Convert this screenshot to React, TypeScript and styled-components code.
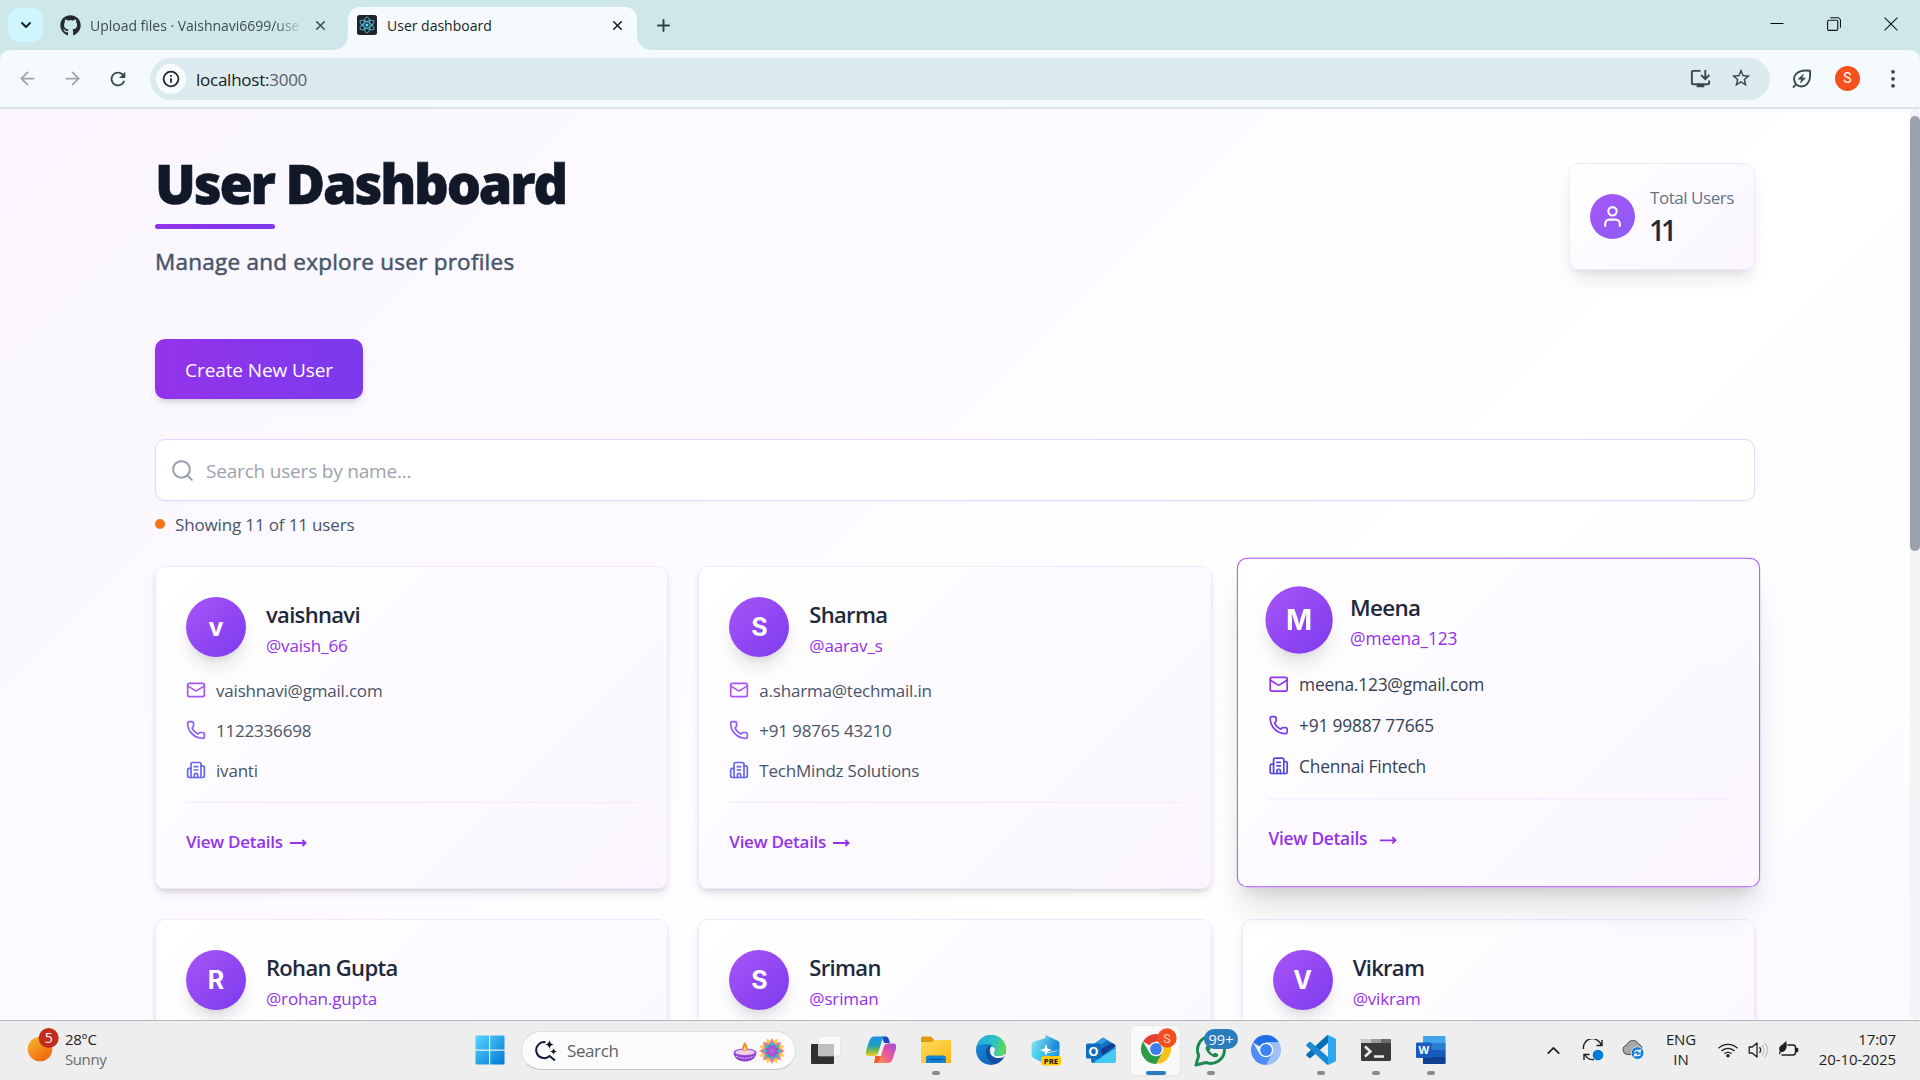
import React from "react";
import styled, { createGlobalStyle, css } from "styled-components";
import {
  ArrowLeft, ArrowRight, Building2, ChevronDown, ChevronUp, Mail, Phone, Plus, Search, User, X,
} from "lucide-react";
import { FaGithub } from "react-icons/fa";
import { MdOutlineInstallDesktop, MdOutlineRefresh, MdStarBorder } from "react-icons/md";

const GlobalStyle = createGlobalStyle`
  * { box-sizing: border-box; }
  body {
    margin: 0;
    overflow: hidden;
    font-family: "Open Sans", "Noto Sans", sans-serif;
  }
  svg { display: block; flex: none; }
`;

const Screen = styled.div`
  width: 1920px;
  height: 1080px;
  display: flex;
  flex-direction: column;
  overflow: hidden;
`;

/* ---------- browser frame ---------- */

const TabStrip = styled.div`
  height: 50px;
  flex: none;
  display: flex;
  background: #cee7eb;
  padding-left: 8px;
`;

const TabMenu = styled.div`
  width: 35px;
  height: 34px;
  margin-top: 8px;
  border-radius: 11px;
  background: #cff6fe;
  display: flex;
  align-items: center;
  justify-content: center;
`;

const Tab = styled.div<{ $active?: boolean }>`
  height: 50px;
  display: flex;
  align-items: center;
  font-size: 14px;
  color: #3c4d51;
  white-space: nowrap;
  width: 305px;
  padding: 0 20px 0 17px;
  ${(p) =>
    p.$active &&
    css`
      position: relative;
      width: 289px;
      height: 43px;
      margin-top: 7px;
      padding: 0 12px 7px 9px;
      background: #f5fafd;
      border-radius: 12px 12px 0 0;
      color: #1b2326;
      &::before,
      &::after {
        content: "";
        position: absolute;
        bottom: 0;
        width: 14px;
        height: 14px;
      }
      &::before {
        left: -14px;
        background: radial-gradient(circle at 0 0, transparent 13.5px, #f5fafd 14px);
      }
      &::after {
        right: -14px;
        background: radial-gradient(circle at 100% 0, transparent 13.5px, #f5fafd 14px);
      }
    `}
`;

const TabTitle = styled.span<{ $fade?: boolean }>`
  flex: 1;
  overflow: hidden;
  margin: 0 14px 0 10px;
  ${(p) =>
    p.$fade &&
    css`
      margin: 0 10px 0 9px;
      letter-spacing: -0.02px;
      mask-image: linear-gradient(90deg, #000 185px, transparent 213px);
    `}
`;

const NewTab = styled.div`
  display: flex;
  align-items: center;
  padding-left: 17px;
`;

const WindowButtons = styled.div`
  margin-left: auto;
  display: flex;
  align-items: center;
  height: 48px;
`;

const WindowButton = styled.div`
  width: 57px;
  display: flex;
  justify-content: center;
  &:last-child { width: 58px; }
`;

const ToolbarBack = styled.div`
  flex: none;
  background: #cee7eb;
`;

const Toolbar = styled.div`
  height: 59px;
  display: flex;
  align-items: center;
  background: #f5fafd;
  border-bottom: 2px solid #d9e4e9;
  border-radius: 10px 10px 0 0;
  padding: 0 24px 0 17px;
`;

const NavButton = styled.div<{ $muted?: boolean }>`
  width: 45px;
  display: flex;
  color: ${(p) => (p.$muted ? "#9aa5a9" : "#36484d")};
`;

const Omnibox = styled.div`
  flex: 1;
  height: 42px;
  border-radius: 21px;
  background: #dcebef;
  display: flex;
  align-items: center;
  padding: 0 18px 0 6px;
  margin: 0 21px 0 -2px;
  color: #3c4649;
`;

const SiteInfo = styled.div`
  width: 30px;
  height: 30px;
  border-radius: 50%;
  background: #f8fcfe;
  display: flex;
  align-items: center;
  justify-content: center;
`;

const Url = styled.span`
  flex: 1;
  margin-left: 10px;
  padding-top: 1px;
  font-size: 17px;
  letter-spacing: -0.25px;
  color: #1a2124;
  span { color: #566367; }
`;

const OmniIcons = styled.div`
  display: flex;
  gap: 18px;
`;

const Profile = styled.div`
  width: 25px;
  height: 25px;
  margin: 0 30px 0 22px;
  border-radius: 50%;
  background: #f6511d;
  color: #fff;
  font: 14px/25px Roboto, sans-serif;
  text-align: center;
`;

/* ---------- page ---------- */

const Viewport = styled.div`
  height: 911px;
  flex: none;
  display: flex;
  overflow: hidden;
`;

const Page = styled.main`
  width: 1910px;
  height: 1885px;
  padding: 44px 155px 0;
  background: linear-gradient(135deg, #faf5ff 0%, #ffffff 50%, #faf5ff 100%);
`;

const ScrollTrack = styled.div`
  width: 10px;
  height: 911px;
  padding-top: 7px;
  border-radius: 5px;
  background: #f1f3f5;
`;

const ScrollThumb = styled.div`
  height: 435px;
  border-radius: 5px;
  background: #9ba0ad;
`;

const Header = styled.header`
  display: flex;
  justify-content: space-between;
  align-items: flex-start;
  height: 186px;
`;

const Title = styled.h1`
  margin: 0 0 11px;
  font-size: 54px;
  line-height: 61px;
  height: 60px;
  font-weight: 800;
  letter-spacing: -2.2px;
  color: #111827;
  -webkit-text-stroke: 0.6px #111827;
`;

const Underline = styled.div`
  width: 120px;
  height: 5px;
  border-radius: 3px;
  background: linear-gradient(90deg, #9333ea, #7c3aed);
`;

const Subtitle = styled.p`
  margin: 17px 0 0;
  font-size: 22.5px;
  line-height: 31px;
  letter-spacing: 0.24px;
  color: #475569;
  -webkit-text-stroke: 0.5px #475569;
`;

const StatCard = styled.div`
  display: flex;
  align-items: center;
  gap: 15px;
  width: 186px;
  height: 107px;
  margin-top: 10px;
  padding: 0 20px;
  border: 1px solid #f3e8ff;
  border-radius: 10px;
  background: linear-gradient(135deg, #ffffff, #faf5ff);
  box-shadow: 0 12px 19px -4px rgba(0, 0, 0, 0.1), 0 5px 8px -5px rgba(0, 0, 0, 0.1);
`;

const StatIcon = styled.div`
  width: 45px;
  height: 45px;
  flex: none;
  border-radius: 50%;
  background: linear-gradient(135deg, #a855f7, #8b5cf6);
  color: #fff;
  display: flex;
  align-items: center;
  justify-content: center;
`;

const StatLabel = styled.div`
  margin-top: 2px;
  font-size: 17px;
  line-height: 25px;
  letter-spacing: -0.45px;
  white-space: nowrap;
  color: #64748b;
`;

const StatValue = styled.div`
  font-size: 28px;
  line-height: 41px;
  font-weight: 650;
  letter-spacing: -4px;
  margin-left: -1px;
  color: #1e293b;
`;

const CreateButton = styled.button`
  display: block;
  width: 208px;
  height: 60px;
  padding: 2px 0 0;
  border: 0;
  border-radius: 10px;
  background: linear-gradient(90deg, #9333ea, #7c3aed);
  color: #fff;
  font: 19px/30px "Open Sans", sans-serif;
  letter-spacing: -0.1px;
  box-shadow: 0 5px 8px -1px rgba(0, 0, 0, 0.1), 0 3px 5px -2px rgba(0, 0, 0, 0.1);
`;

const SearchField = styled.div`
  display: flex;
  align-items: center;
  gap: 11px;
  height: 62px;
  margin-top: 40px;
  padding-left: 14px;
  border: 1px solid #e9d5ff;
  border-radius: 10px;
  background: #fff;
  box-shadow: 0 1px 3px rgba(0, 0, 0, 0.05);
  color: #9ca3af;
  font-size: 19px;
  letter-spacing: -0.19px;
  span { padding-top: 1px; }
`;

const ResultCount = styled.div`
  display: flex;
  align-items: center;
  gap: 10px;
  height: 27px;
  margin: 10px 0 28px;
  font-size: 17px;
  letter-spacing: -0.15px;
  color: #475569;
  &::before {
    content: "";
    width: 10px;
    height: 10px;
    border-radius: 50%;
    margin-bottom: 1px;
    background: #f97316;
  }
`;

const Grid = styled.section`
  display: grid;
  grid-template-columns: repeat(3, 1fr);
  gap: 30px;
`;

const Avatar = styled.div`
  width: 60px;
  height: 60px;
  flex: none;
  border-radius: 50%;
  background: linear-gradient(135deg, #a855f7, #7c3aed);
  box-shadow: 0 12px 19px -4px rgba(0, 0, 0, 0.13), 0 5px 8px -5px rgba(0, 0, 0, 0.1);
  color: #fff;
  font: 750 25px/61px Inter, "Liberation Sans", sans-serif;
  text-align: center;
`;

const CardHead = styled.div`
  display: flex;
  gap: 20px;
  height: 60px;
  margin-bottom: 18px;
`;

const Name = styled.div`
  font-size: 22px;
  line-height: 34px;
  font-weight: 600;
  letter-spacing: -0.68px;
  color: #1e293b;
`;

const Handle = styled.div`
  margin-top: 2px;
  font-size: 17px;
  line-height: 26px;
  letter-spacing: -0.15px;
  color: #9333ea;
`;

const Contact = styled.div<{ $tone: string }>`
  display: flex;
  align-items: center;
  gap: 10px;
  height: 30px;
  font-size: 17px;
  letter-spacing: -0.2px;
  color: #475569;
  svg { color: ${(p) => p.$tone}; margin-bottom: 1px; }
`;

const Divider = styled.div`
  height: 1px;
  margin: 17px 0 25px;
  background: #f3e8ff;
`;

const Details = styled.a`
  display: flex;
  align-items: center;
  gap: 7px;
  height: 27px;
  font-size: 17px;
  font-weight: 600;
  letter-spacing: -0.27px;
  color: #9333ea;
  svg { margin-top: 3px; }
`;

const Card = styled.article<{ $hovered?: boolean }>`
  height: 323px;
  padding: 30px;
  border: 1px solid #f3e8ff;
  border-radius: 10px;
  background: linear-gradient(135deg, #ffffff, #faf5ff);
  box-shadow: 0 5px 8px -1px rgba(0, 0, 0, 0.1), 0 3px 5px -2px rgba(0, 0, 0, 0.1);
  ${(p) =>
    p.$hovered &&
    css`
      border-color: #a855f7;
      transform: translateY(-5px) scale(1.02);
      box-shadow: 0 25px 31px -6px rgba(0, 0, 0, 0.12), 0 10px 13px -7px rgba(0, 0, 0, 0.1);
      ${Avatar} { transform: scale(1.1); }
      ${Contact} { color: #334155; }
      ${Details} { gap: 12px; }
    `}
`;

const ContactList = styled.div`
  display: flex;
  flex-direction: column;
  gap: 10px;
`;

/* ---------- taskbar ---------- */

const Taskbar = styled.footer`
  flex: 1;
  display: flex;
  background: #eeeeee;
  border-top: 1px solid #b9b5bd;
  color: #1f1f1f;
  font-size: 15px;
`;

const Weather = styled.div`
  width: 462px;
  display: flex;
  gap: 5px;
  padding: 7px 0 0 25px;
`;

const TwoLines = styled.div<{ $align?: string; $w?: number; $muted?: boolean }>`
  width: ${(p) => (p.$w ? `${p.$w}px` : "auto")};
  padding-top: ${(p) => (p.$muted ? 1 : 0)}px;
  text-align: ${(p) => p.$align ?? "left"};
  line-height: 20px;
  letter-spacing: ${(p) => (p.$muted ? -0.4 : -0.1)}px;
  div:last-child { color: ${(p) => (p.$muted ? "#6a6a6a" : "inherit")}; }
`;

const Slot = styled.div<{ $w?: number; $active?: boolean; $dot?: boolean }>`
  width: ${(p) => p.$w ?? 55}px;
  height: 58px;
  display: flex;
  align-items: center;
  justify-content: center;
  position: relative;
  ${(p) =>
    p.$active &&
    css`
      width: 49px;
      height: 49px;
      margin: 5px 3px 0;
      border-radius: 5px;
      background: #f9f9f9;
      box-shadow: 0 0 1px 1px #e4e4e4;
      padding-bottom: 3px;
    `}
  ${(p) =>
    (p.$dot || p.$active) &&
    css`
      &::after {
        content: "";
        position: absolute;
        bottom: ${p.$active ? 0 : 4}px;
        left: 50%;
        transform: translateX(-50%);
        width: ${p.$active ? 20 : 8}px;
        height: 4px;
        border-radius: 2px;
        background: ${p.$active ? "#2a7dbc" : "#8b8b8b"};
      }
    `}
`;

const TaskSearch = styled.div`
  width: 275px;
  height: 39px;
  margin: 10px 2px 0 4px;
  padding: 0 10px 0 13px;
  border: 1px solid #dedede;
  border-bottom-color: #c4c4c4;
  border-radius: 20px;
  background: #fbfbfb;
  display: flex;
  align-items: center;
  font-size: 17px;
  letter-spacing: -0.4px;
  color: #606060;
  span { flex: 1; margin-left: 9px; }
`;

const Tray = styled.div`
  margin-left: auto;
  display: flex;
  padding-right: 24px;
`;

const TrayText = styled.div<{ $shift?: number }>`
  padding: 8px ${(p) => p.$shift ?? 0}px 0 0;
`;

type Person = {
  name: string; handle: string; email?: string; phone?: string; company?: string; hovered?: boolean;
};

const people: Person[] = [
  { name: "vaishnavi", handle: "@vaish_66", email: "vaishnavi@gmail.com", phone: "1122336698", company: "ivanti" },
  { name: "Sharma", handle: "@aarav_s", email: "a.sharma@techmail.in", phone: "+91 98765 43210", company: "TechMindz Solutions" },
  { name: "Meena", handle: "@meena_123", email: "meena.123@gmail.com", phone: "+91 99887 77665", company: "Chennai Fintech", hovered: true },
  { name: "Rohan Gupta", handle: "@rohan.gupta" },
  { name: "Sriman", handle: "@sriman" },
  { name: "Vikram", handle: "@vikram" },
];

const LongArrow = () => (
  <svg width="17" height="10" viewBox="0 0 17 10" fill="none" stroke="currentColor" strokeWidth="1.8">
    <path d="M0 5h15.5M12.4 2 15.6 5l-3.200 3" />
  </svg>
);

function UserCard({ p }: { p: Person }) {
  const tones = p.hovered ? ["#9333ea", "#7c3aed", "#4f46e5"] : ["#a855f7", "#8b5cf6", "#6366f1"];
  return (
    <Card $hovered={p.hovered}>
      <CardHead>
        <Avatar>{p.name[0]}</Avatar>
        <div>
          <Name>{p.name}</Name>
          <Handle>{p.handle}</Handle>
        </div>
      </CardHead>
      {p.email && (
        <>
          <ContactList>
            <Contact $tone={tones[0]}><Mail size={20} />{p.email}</Contact>
            <Contact $tone={tones[1]}><Phone size={20} />{p.phone}</Contact>
            <Contact $tone={tones[2]}><Building2 size={20} />{p.company}</Contact>
          </ContactList>
          <Divider />
          <Details>View Details <LongArrow /></Details>
        </>
      )}
    </Card>
  );
}

/* ---------- drawn icons ---------- */

const ReactLogo = () => (
  <svg width="20" height="20" viewBox="0 0 20 20" fill="none" stroke="#53c1de" strokeWidth="0.9">
    <rect width="20" height="20" rx="2.5" fill="#20232a" stroke="none" />
    <circle cx="10" cy="10" r="1.5" fill="#61dafb" stroke="none" />
    {[30, 90, 150].map((a) => (
      <ellipse key={a} cx="10" cy="10" rx="8" ry="3.1" transform={`rotate(${a} 10 10)`} />
    ))}
  </svg>
);

const InfoIcon = () => (
  <svg width="18" height="18" viewBox="0 0 18 18" fill="none" stroke="#1f292c" strokeWidth="1.8">
    <circle cx="9" cy="9" r="7.4" />
    <path d="M9 8.2v4.6M9 5v1.8" />
  </svg>
);

const SaverIcon = () => (
  <svg width="22" height="22" viewBox="0 0 22 22" fill="none" stroke="#344b50" strokeWidth="1.9" strokeLinejoin="round">
    <path d="M19 2.800c-6-.9-11 .2-13.800 3C2.400 8.600 2.400 13 5 16.200c3 3 8 3.200 11 0 2.800-3 3.600-7.500 3-13.400ZM5.400 15.800 2 19.600" />
    <path d="M12.400 6.200 7 11.200h3.400L9.400 15l5.200-5h-3.300z" fill="#344b50" strokeWidth="0.500" />
  </svg>
);

const DotsIcon = () => (
  <svg width="6" height="20" viewBox="0 0 6 20" fill="#36484d">
    <circle cx="3" cy="2.800" r="1.900" /><circle cx="3" cy="9.800" r="1.900" /><circle cx="3" cy="16.800" r="1.900" />
  </svg>
);

const MinimizeIcon = () => (
  <svg width="14" height="14" viewBox="0 0 14 14"><path d="M.5 6.500h13" stroke="#000" /></svg>
);

const RestoreIcon = () => (
  <svg width="14" height="14" viewBox="0 0 14 14" fill="none" stroke="#111" strokeWidth="1.100">
    <rect x=".6" y="3.200" width="10.200" height="10.200" rx="1.400" />
    <path d="M3.200.8h7.300a3 3 0 0 1 3 3v7" />
  </svg>
);

const CloseIcon = () => (
  <svg width="14" height="14" viewBox="0 0 14 14" stroke="#111" strokeWidth="1.100"><path d="m.6.6 12.800 12.800M13.400.6.6 13.400" /></svg>
);

const WeatherIcon = () => (
  <svg width="35" height="36" viewBox="0 0 35 36">
    <defs>
      <linearGradient id="sun" x1="0" y1="0" x2=".7" y2="1"><stop offset="0" stopColor="#f3bd2c" /><stop offset="1" stopColor="#f2650f" /></linearGradient>
    </defs>
    <circle cx="15" cy="21" r="12.300" fill="url(#sun)" />
    <circle cx="23.700" cy="10" r="10" fill="#c42b1c" />
    <text x="23.700" y="15" fontSize="14" fill="#fff" textAnchor="middle">5</text>
  </svg>
);

const StartIcon = () => (
  <svg width="30" height="30" viewBox="0 0 30 30">
    <defs>
      <linearGradient id="win" x1="0" y1="0" x2="1" y2="1" ><stop offset="0" stopColor="#56d5ff" /><stop offset="1" stopColor="#0377d4" /></linearGradient>
    </defs>
    <path fill="url(#win)" d="M1.500.5H14v14H.5v-13a1 1 0 0 1 1-1ZM15.200.5h13.300a1 1 0 0 1 1 1v13H15.200ZM.5 15.700H14v13.800H1.500a1 1 0 0 1-1-1ZM15.200 15.700h14.300v12.800a1 1 0 0 1-1 1H15.200Z" />
  </svg>
);

const SparkSearch = () => (
  <svg width="23" height="22" viewBox="0 0 23 22" fill="none" stroke="#101a3a" strokeWidth="2">
    <path d="M10.500 2.200A8 8 0 1 0 14.600 16L20 20.500" />
    <path d="M14.500 0c.6 3 1.400 3.800 4.500 4.500-3.100.7-3.900 1.500-4.500 4.500-.6-3-1.400-3.800-4.500-4.500 3.100-.7 3.900-1.500 4.500-4.500ZM18.500 8c.4 2.200 1 2.800 3.500 3.500-2.500.7-3.100 1.300-3.500 3.500-.4-2.200-1-2.800-3.500-3.500 2.500-.7 3.100-1.300 3.500-3.500Z" fill="#1c1024" stroke="none" />
  </svg>
);

const star = (n: number, r1: number, r2: number, cx: number, cy: number, turn = 0) =>
  Array.from({ length: n * 2 }, (_, i) => {
    const r = i % 2 ? r2 : r1;
    const a = (Math.PI * i) / n + turn;
    return `${(cx + r * Math.sin(a)).toFixed(1)},${(cy - r * Math.cos(a)).toFixed(1)}`;
  }).join(" ");

const Festive = () => (
  <svg width="52" height="28" viewBox="0 0 52 28">
    <path d="M.5 15h23c0 5-4 9.500-11.500 9.500S.5 20 .5 15Z" fill="#8b3fd0" />
    <ellipse cx="12" cy="15" rx="11.500" ry="3.600" fill="#b05be8" />
    <ellipse cx="12" cy="15.400" rx="9.400" ry="2.600" fill="#ecd3dc" />
    <path d="M3 19c5 3 13 3 18 0" stroke="#eab8ff" strokeWidth="1.200" strokeDasharray="2 1" fill="none" />
    <path d="M11.800 5c3 4.200 3.600 7.500 0 9.500-4-2-2.800-5.300 0-9.500Z" fill="#f58a1f" />
    <path d="M11.800 9c1.500 2.500 1.300 4 0 5-1.500-1-1.500-2.500 0-5Z" fill="#ffe08a" />
    <polygon points={star(8, 13.600, 9, 39, 14, Math.PI / 8)} fill="#f9cf54" />
    <polygon points={star(8, 13, 8, 39, 14)} fill="#f57f8d" />
    <polygon points={star(8, 9.600, 6.500, 39, 14)} fill="#2fc0bd" />
    <polygon points={star(8, 7.300, 5, 39, 14, Math.PI / 8)} fill="#9a58cf" />
    <circle cx="39" cy="14" r="2.600" fill="#c05fcb" />
  </svg>
);

const TaskViewIcon = () => (
  <svg width="32" height="30" viewBox="0 0 32 30">
    <rect x="1" y="9" width="23" height="20" rx="1" fill="#30302e" />
    <rect x="8.500" y="1" width="22" height="20" rx="1" fill="#fafafa" stroke="#dcdcdc" strokeWidth=".6" />
    <rect x="8.500" y="9" width="15.500" height="12" fill="#c0c0bf" />
  </svg>
);

const CopilotIcon = () => (
  <svg width="32" height="30" viewBox="0 0 32 30">
    <defs>
      <linearGradient id="cpA" x1="0" y1="0" x2="0" y2="1"><stop offset="0" stopColor="#1593e8" /><stop offset=".45" stopColor="#1f9fc0" /><stop offset=".7" stopColor="#6cba57" /><stop offset="1" stopColor="#f4cf22" /></linearGradient>
      <linearGradient id="cpB" x1="1" y1="0" x2="0" y2="1"><stop offset="0" stopColor="#9b4fe8" /><stop offset=".5" stopColor="#e9569a" /><stop offset="1" stopColor="#ff9a4b" /></linearGradient>
    </defs>
    <path d="M17 1.500h3.500c2 0 2.800 1 3.400 3L25 8h-6Z" fill="#1b47c6" />
    <path d="M7.500 28h4c1.500 0 2.400-1 3-3l1-4H8.500c.5 3-1 5.500-1 7Z" fill="#f25d2e" transform="translate(1.500 0)" />
    <path d="M9.500 1.500H20c-2 1-2.800 3-3.500 5.500l-3 10c-.8 2.700-2 4-4.500 4H4c-3 0-3.600-2-3-5l3-9.500c1-3 2.500-5 5.500-5Z" fill="url(#cpA)" />
    <path d="M22.500 28H12c2-1 2.800-3 3.500-5.500l3-10c.8-2.700 2-4 4.500-4h5c3 0 3.600 2 3 5L28 23c-1 3-2.500 5-5.500 5Z" fill="url(#cpB)" />
  </svg>
);

const FolderIcon = () => (
  <svg width="32" height="30" viewBox="0 0 32 30">
    <defs><linearGradient id="fold" x1="0" y1="0" x2="1" y2="1"><stop offset="0" stopColor="#ffdc5c" /><stop offset="1" stopColor="#fcb813" /></linearGradient></defs>
    <path d="M1 3a1.500 1.500 0 0 1 1.500-1.500H11L14 4.500V9H1Z" fill="#dd9a0a" />
    <path d="M1 7h11l2.500-2H30a1 1 0 0 1 1 1v22H1Z" fill="url(#fold)" />
    <path d="M6 28v-5a2.500 2.500 0 0 1 2.500-2.500h15A2.500 2.500 0 0 1 26 23v5Z" fill="#1480d2" />
    <path d="M9.500 24.500h13" stroke="#0b56a0" strokeWidth="1.200" />
  </svg>
);

const EdgeIcon = () => (
  <svg width="30" height="30" viewBox="0 0 30 30">
    <defs>
      <linearGradient id="edA" x1="0" y1=".3" x2="1" y2=".5"><stop offset="0" stopColor="#2aa9e6" /><stop offset=".6" stopColor="#2cc4bf" /><stop offset="1" stopColor="#63dc4c" /></linearGradient>
      <linearGradient id="edB" x1="0" y1="0" x2=".6" y2="1"><stop offset="0" stopColor="#1a94e0" /><stop offset="1" stopColor="#0d62b8" /></linearGradient>
    </defs>
    <circle cx="15" cy="15" r="15" fill="url(#edB)" />
    <path d="M.5 12C2 4.500 8 0 15 0c9 0 15 6.500 15 13.500 0 5-3.800 7.500-7.500 7.500-3 0-4.700-1-4.700-2.200 0-.8 1.200-1.500 1.200-3.800 0-3-3-6-8-6C6 9 2 10 .5 12Z" fill="url(#edA)" />
    <path d="M12.500 10.500C8 14 9.500 26.500 19 29c4-1.200 7.500-4 9-7.500-3.500 2.300-11 2.500-14-2.500-1.500-3-.5-6.500 1-8Z" fill="#134f9c" />
    <path d="M15.500 11.500c2.500 0 3.700 2 3.500 3.800-.2 1.500-1.200 2.200-1.200 3.200 0 2 3 3 6 2.400 3-.5 5-1.800 6.200-4-.2 2-.8 3.500-1.700 4.800-4 2.400-10 1.600-12.600-1.200-2.500-3-1.900-8-.2-9Z" fill="#eee" />
  </svg>
);

const PreIcon = () => (
  <svg width="32" height="32" viewBox="0 0 32 32">
    <defs>
      <linearGradient id="preA" x1="0" y1="0" x2="1" y2=".3"><stop offset="0" stopColor="#8ff5f7" /><stop offset="1" stopColor="#1b87d8" /></linearGradient>
      <linearGradient id="preB" x1="0" y1="0" x2="1" y2=".3"><stop offset="0" stopColor="#62e6f2" /><stop offset="1" stopColor="#1c9ae0" /></linearGradient>
    </defs>
    <path d="M1.500 14.500V11c0-2 .8-3 2.800-3.600L15.500 4V1l9.500 4.500c3.500 1.500 4.500 2 4.500 4.500v3c0 2-1 3-3.500 3.500L19 18l-8-1.500-7 .5c-1.500 0-2.500-1-2.500-2.500Z" fill="url(#preA)" />
    <path d="M29.500 12v8c0 2-.8 3-2.500 3.600L16 28v2.500L5.500 25c-3-1.500-4-2.500-4-5v-2c0-1 .5-2 2-2l8 .5 7 2.500 6.500-1.500c3-.8 4-2.500 4.500-5.500Z" fill="url(#preB)" />
    <path d="m16 10 1.600 4.400L22 16l-4.400 1.600L16 22l-1.600-4.400L10 16l4.400-1.600Z" fill="#fff" />
    <rect x="11" y="22" width="20" height="9.500" rx="2.500" fill="#ffc80a" />
    <text x="21" y="29.600" fontSize="7.800" fontWeight="700" textAnchor="middle" fill="#111">PRE</text>
  </svg>
);

const OutlookIcon = () => (
  <svg width="32" height="30" viewBox="0 0 32 30">
    <path d="M6 11 18 2.500 30.500 10v16a2 2 0 0 1-2 2H8a2 2 0 0 1-2-2Z" fill="#1272c4" />
    <path d="M9 9 18 3l4 2-12 9Z" fill="#2aa2e4" />
    <path d="M14 15 27 8l3.500 2.500L18 20Z" fill="#103f91" />
    <path d="m30.500 13-21 13.500c0 1 .5 1.500 1.500 1.500h17.500a2 2 0 0 0 2-2Z" fill="#43c9f3" />
    <rect x="1" y="8.500" width="15" height="15" rx="1.500" fill="#0f6cbd" />
    <text x="8.500" y="20.500" fontSize="13" fontWeight="700" textAnchor="middle" fill="#fff">O</text>
  </svg>
);

const ChromeMark = ({ colors }: { colors: string[] }) => (
  <>
    <path d="M15 15 2 7.500A15 15 0 0 1 28 7.500H15Z" fill={colors[0]} />
    <path d="M15 7.500h13A15 15 0 0 1 15 30l6.500-11.300Z" fill={colors[1]} />
    <path d="M2 7.500A15 15 0 0 0 15 30l6.500-11.300L15 15l-6.500 3.700Z" fill={colors[2]} />
    <circle cx="15" cy="15" r="7.300" fill="#fff" />
    <circle cx="15" cy="15" r="5.900" fill={colors[3]} />
  </>
);

const ChromeIcon = () => (
  <svg width="42" height="44" viewBox="-6 -7 42 44">
    <ChromeMark colors={["#e43e33", "#fbc116", "#2a9c49", "#3b7ded"]} />
    <circle cx="26" cy="4" r="9.700" fill="#f2511f" />
    <text x="26" y="8.500" fontSize="12" textAnchor="middle" fill="#ffd0c0" fontFamily="Roboto, sans-serif">S</text>
  </svg>
);

const ChromiumIcon = () => (
  <svg width="30" height="30" viewBox="0 0 30 30">
    <ChromeMark colors={["#1f6fe8", "#9fc0fa", "#4f8ef7", "#3d83f3"]} />
  </svg>
);

const WhatsAppIcon = () => (
  <svg width="55" height="40" viewBox="0 0 55 40" overflow="visible">
    <path d="M14.200 34.500 4 37l2.700-9.500A13.500 13.500 0 1 1 14.200 34.500Z" transform="translate(9 -2)" fill="none" stroke="#1d8a53" strokeWidth="3" strokeLinejoin="round" />
    <path d="M23.500 16c-1.500 1.500-1.200 4 1.500 7 3.500 3.500 7.500 5.500 9.800 3.300 1.300-1.300.8-2-2.600-3.500l-2 1.200c-1.500-.5-3-2-3.800-3.500l1.200-1.800-1.400-3Z" fill="#1d8a53" />
    <rect x="21" y="-1" width="34" height="20" rx="10" fill="#2a7dbc" />
    <text x="38" y="14.500" fontSize="14.500" textAnchor="middle" fill="#fff">99+</text>
  </svg>
);

const CodeIcon = () => (
  <svg width="30" height="30" viewBox="0 0 30 30">
    <path d="m22 0 6.500 3a2 2 0 0 1 1.500 2v20a2 2 0 0 1-1.500 2L22 30Z" fill="#2aa9f2" />
    <path d="M22 0v8L4 23.500.8 21c-.8-.7-.8-1.500 0-2.300L20.500.8Z" fill="#0a6fb8" />
    <path d="M22 30v-8L4 6.500.8 9c-.8.7-.8 1.500 0 2.300l19.700 17.900Z" fill="#1a8ad2" />
  </svg>
);

const TerminalIcon = () => (
  <svg width="30" height="24" viewBox="0 0 30 24">
    <rect y="1" width="30" height="22" rx="1.500" fill="#3a3a3a" />
    <path d="M1.500 1H10v4H0V2.500A1.500 1.500 0 0 1 1.500 1Z" fill="#c9c9c9" />
    <path d="M10 1h10v4H10Z" fill="#9c9c9c" /><path d="M20 1h8.500A1.500 1.500 0 0 1 30 2.500V5H20Z" fill="#6b6b6b" />
    <path d="m4 8.500 5.500 5L4 18.500M13 18.500h10" stroke="#eee" strokeWidth="2.500" fill="none" />
  </svg>
);

const WordIcon = () => (
  <svg width="30" height="30" viewBox="0 0 30 30">
    <rect x="7" y="1" width="22.500" height="28" rx="1.200" fill="#41a5ee" />
    <path d="M7 8h22.500v7H7Z" fill="#2b7cd3" /><path d="M7 15h22.500v7H7Z" fill="#185abd" />
    <path d="M7 22h22.500v6a1 1 0 0 1-1 1H8a1 1 0 0 1-1-1Z" fill="#103f91" />
    <rect x="0" y="7.500" width="15.500" height="15.500" rx="1.200" fill="#185abd" />
    <text x="7.700" y="19.300" fontSize="11" fontWeight="700" textAnchor="middle" fill="#fff">W</text>
  </svg>
);

const SyncIcon = () => (
  <svg width="22" height="22" viewBox="0 0 22 22" fill="none" stroke="#1f1f1f" strokeWidth="1.400">
    <path d="M1.500 10A9 9 0 0 1 19 6M20 1v5.500h-5.500M12 20.500c-4 .5-7-1-9-4.500M2 21v-5.500h5.500" />
    <circle cx="16" cy="16" r="5.300" fill="#0078d7" stroke="none" />
  </svg>
);

const CloudIcon = () => (
  <svg width="22" height="20" viewBox="0 0 22 20">
    <path d="M5.500 14.500a4.700 4.700 0 0 1-.7-9.300A6.500 6.500 0 0 1 17 4.500c2 .6 2.800 2 2.800 4v6Z" fill="#a9a9a9" stroke="#4a4a4a" />
    <circle cx="15.500" cy="13" r="6.300" fill="#0f7fdc" stroke="#eee" strokeWidth=".8" />
    <path d="M12.500 12.300c.8-2.300 4-2.800 5.500-.8M18.300 9.300v2.500h-2.500M18.500 13.700c-.8 2.300-4 2.800-5.500.8M12.700 16.700v-2.500h2.500" stroke="#fff" strokeWidth="1.200" fill="none" />
  </svg>
);

const WifiIcon = () => (
  <svg width="20" height="16" viewBox="0 0 20 16" fill="none" stroke="#1f1f1f" strokeWidth="1.300">
    <path d="M.6 6.200a13.300 13.300 0 0 1 18.800 0M3.500 9a9.200 9.200 0 0 1 13 0M6.400 11.800a5.100 5.100 0 0 1 7.200 0" />
    <circle cx="10" cy="13.800" r="1.700" fill="#1f1f1f" stroke="none" />
  </svg>
);

const SpeakerIcon = () => (
  <svg width="21" height="18" viewBox="0 0 21 18" fill="none" stroke="#1f1f1f" strokeWidth="1.300" strokeLinejoin="round">
    <path d="M1.200 6h3L9 2v14l-4.800-4h-3ZM11.500 6.300c1.300 1.500 1.300 3.900 0 5.400" />
    <path d="M14 4.200c2.500 2.800 2.500 6.800 0 9.600M16.700 2c3.700 4 3.700 10 0 14" stroke="#bdbdbd" />
  </svg>
);

const BatteryIcon = () => (
  <svg width="21" height="18" viewBox="0 0 21 18">
    <path d="M9.500 4H15a2.500 2.500 0 0 1 2.500 2.500v5A2.500 2.500 0 0 1 15 14H3.500" fill="none" stroke="#1f1f1f" strokeWidth="1.400" />
    <path d="M18 6.700h1A1.300 1.300 0 0 1 20.300 8v2a1.300 1.300 0 0 1-1.300 1.300h-1Z" fill="#1f1f1f" />
    <path d="M8.200 0c.9 4 .8 7.500-1.500 9.700-1.200 1.200-2.500 1.500-3.700 1.300L1.800 13.500l-.8-.5.7-3C-.4 5 4 4.800 8.200 0Z" fill="#1f1f1f" />
  </svg>
);

export default function App() {
  return (
    <Screen>
      <GlobalStyle />
      <TabStrip>
        <TabMenu><ChevronDown size={16} strokeWidth={3} color="#1b2326" /></TabMenu>
        <Tab>
          <FaGithub size={21} color="#24292e" />
          <TabTitle $fade>Upload files · Vaishnavi6699/use</TabTitle>
          <X size={15} strokeWidth={2.6} color="#3c5256" />
        </Tab>
        <Tab $active>
          <ReactLogo />
          <TabTitle>User dashboard</TabTitle>
          <X size={15} strokeWidth={2.6} color="#1b2326" />
        </Tab>
        <NewTab><Plus size={19} strokeWidth={2.4} color="#2c4145" /></NewTab>
        <WindowButtons>
          <WindowButton><MinimizeIcon /></WindowButton>
          <WindowButton><RestoreIcon /></WindowButton>
          <WindowButton><CloseIcon /></WindowButton>
        </WindowButtons>
      </TabStrip>
      <ToolbarBack>
        <Toolbar>
          <NavButton $muted><ArrowLeft size={21} /></NavButton>
          <NavButton $muted><ArrowRight size={21} /></NavButton>
          <NavButton><MdOutlineRefresh size={22} /></NavButton>
          <Omnibox>
            <SiteInfo><InfoIcon /></SiteInfo>
            <Url>localhost:<span>3000</span></Url>
            <OmniIcons>
              <MdOutlineInstallDesktop size={23} />
              <MdStarBorder size={22} />
            </OmniIcons>
          </Omnibox>
          <SaverIcon />
          <Profile>S</Profile>
          <DotsIcon />
        </Toolbar>
      </ToolbarBack>

      <Viewport>
        <Page>
          <Header>
            <div>
              <Title>User Dashboard</Title>
              <Underline />
              <Subtitle>Manage and explore user profiles</Subtitle>
            </div>
            <StatCard>
              <StatIcon><User size={25} /></StatIcon>
              <div>
                <StatLabel>Total Users</StatLabel>
                <StatValue>11</StatValue>
              </div>
            </StatCard>
          </Header>
          <CreateButton>Create New User</CreateButton>
          <SearchField>
            <Search size={25} />
            <span>Search users by name...</span>
          </SearchField>
          <ResultCount>Showing 11 of 11 users</ResultCount>
          <Grid>
            {people.map((p) => <UserCard key={p.name} p={p} />)}
          </Grid>
        </Page>
        <ScrollTrack><ScrollThumb /></ScrollTrack>
      </Viewport>

      <Taskbar>
        <Weather>
          <WeatherIcon />
          <TwoLines $muted><div>28°C</div><div>Sunny</div></TwoLines>
        </Weather>
        <Slot><StartIcon /></Slot>
        <TaskSearch><SparkSearch /><span>Search</span><Festive /></TaskSearch>
        <Slot><TaskViewIcon /></Slot>
        <Slot><CopilotIcon /></Slot>
        <Slot $dot><FolderIcon /></Slot>
        <Slot><EdgeIcon /></Slot>
        <Slot><PreIcon /></Slot>
        <Slot><OutlookIcon /></Slot>
        <Slot $active><ChromeIcon /></Slot>
        <Slot $dot><WhatsAppIcon /></Slot>
        <Slot><ChromiumIcon /></Slot>
        <Slot $dot><CodeIcon /></Slot>
        <Slot $dot><TerminalIcon /></Slot>
        <Slot $dot><WordIcon /></Slot>
        <Tray>
          <Slot $w={40}><ChevronUp size={21} strokeWidth={2} /></Slot>
          <Slot $w={40}><SyncIcon /></Slot>
          <Slot $w={40}><CloudIcon /></Slot>
          <TrayText $shift={4}><TwoLines $w={56} $align="center"><div>ENG</div><div>IN</div></TwoLines></TrayText>
          <Slot $w={30}><WifiIcon /></Slot>
          <Slot $w={30}><SpeakerIcon /></Slot>
          <Slot $w={30}><BatteryIcon /></Slot>
          <TrayText><TwoLines $w={93} $align="right"><div>17:07</div><div>20-10-2025</div></TwoLines></TrayText>
        </Tray>
      </Taskbar>
    </Screen>
  );
}
